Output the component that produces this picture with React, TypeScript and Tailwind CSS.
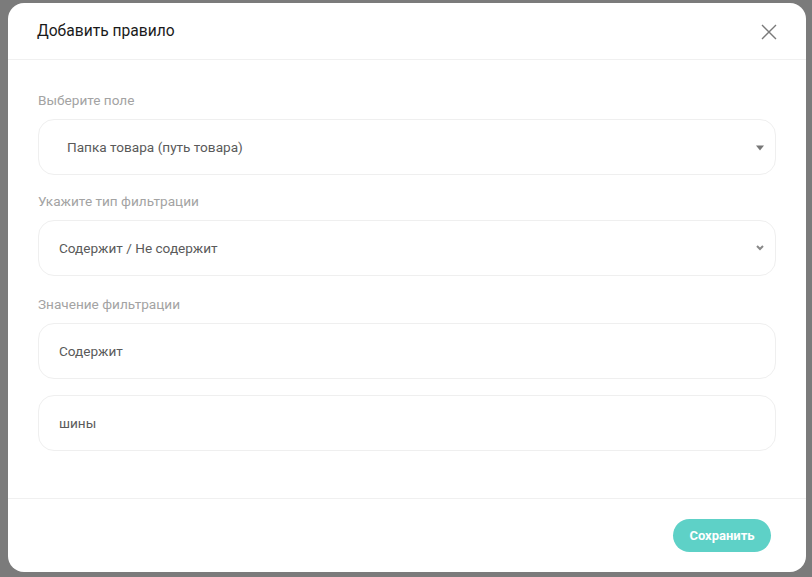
import React from "react";

function Field({ value, arrow, indent }: { value: string; arrow?: "triangle" | "chevron"; indent?: boolean }) {
    return (
        <div className="relative flex h-[56px] items-center rounded-2xl border border-[#efefef] bg-white">
            <span className={`${indent ? "pl-[28px]" : "pl-[20px]"} text-[13.6px] text-[#5a5a5a]`}>{value}</span>
            {arrow === "triangle" && (
                <svg className="absolute right-[11px] top-[25px]" width="8" height="6" viewBox="0 0 8 6">
                    <path d="M0 0.5h8L4 5.5z" fill="#777" />
                </svg>
            )}
            {arrow === "chevron" && (
                <svg className="absolute right-[11px] top-[24px]" width="8" height="6" viewBox="0 0 8 6">
                    <path d="M1 1l3 3 3-3" fill="none" stroke="#888" strokeWidth="2" />
                </svg>
            )}
        </div>
    );
}

function Label({ children }: { children: React.ReactNode }) {
    return <div className="mb-[9px] text-[13.6px] leading-[20px] text-[#a3a3a3]">{children}</div>;
}

export default function App() {
    return (
        <div
            className="relative h-[577px] w-[812px] overflow-hidden bg-[#7b7b7b] pl-[8px] pt-[3px]"
            style={{ fontFamily: "Roboto, 'Liberation Sans', sans-serif" }}
        >
            {/* Modal */}
            <div className="flex h-[569px] w-[798px] flex-col rounded-2xl bg-white">
                {/* Header */}
                <div className="flex h-[57px] items-center justify-between border-b border-[#f0f0f0] pl-[29px] pr-[29px] pt-[2px]">
                    <h1 className="text-[15.6px] text-[#1a1a1a]">Добавить правило</h1>
                    <svg width="16" height="16" viewBox="0 0 16 16">
                        <path d="M1 1l14 14M15 1L1 15" stroke="#7a7a7a" strokeWidth="1.4" />
                    </svg>
                </div>

                {/* Body */}
                <div className="flex-1 px-[30px] pt-[30px]">
                    <Label>Выберите поле</Label>
                    <Field value="Папка товара (путь товара)" arrow="triangle" indent />

                    <div className="mt-[16px]">
                        <Label>Укажите тип фильтрации</Label>
                        <Field value="Содержит / Не содержит" arrow="chevron" />
                    </div>

                    <div className="mt-[18px]">
                        <Label>Значение фильтрации</Label>
                        <Field value="Содержит" />
                    </div>

                    <div className="mt-[16px]">
                        <Field value="шины" />
                    </div>
                </div>

                {/* Footer */}
                <div className="flex h-[74px] items-center justify-end border-t border-[#f0f0f0] pr-[35px]">
                    <button className="h-[33px] w-[98px] rounded-full bg-[#5ed1c7] text-[13px] font-bold text-white">
                        Сохранить
                    </button>
                </div>
            </div>
        </div>
    );
}
